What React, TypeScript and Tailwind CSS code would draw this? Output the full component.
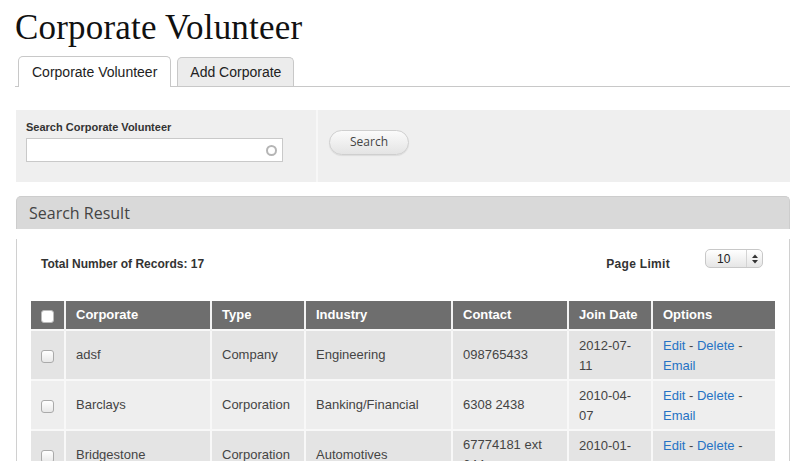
import React from 'react';

type Row = {
  corporate: string;
  type: string;
  industry: string;
  contact: string;
  joinDate: string;
};

const rows: Row[] = [
  { corporate: 'adsf', type: 'Company', industry: 'Engineering', contact: '098765433', joinDate: '2012-07-11' },
  { corporate: 'Barclays', type: 'Corporation', industry: 'Banking/Financial', contact: '6308 2438', joinDate: '2010-04-07' },
  { corporate: 'Bridgestone', type: 'Corporation', industry: 'Automotives', contact: '67774181 ext 644', joinDate: '2010-01-16' },
];

const Checkbox: React.FC<{ header?: boolean }> = ({ header }) => (
  <span
    className={`inline-block w-[13px] h-[13px] rounded-[3px] border ${
      header ? 'bg-white border-[#bbb]' : 'bg-gradient-to-b from-white to-[#e8e8e8] border-[#aaa]'
    }`}
  />
);

const App: React.FC = () => {
  return (
    <div
      className="w-[800px] h-[461px] overflow-hidden bg-white text-[#333]"
      style={{ fontFamily: '"Liberation Sans", Arial, sans-serif' }}
    >
      <div className="pl-[15px] pr-[10px]">
        <h1
          className="pt-[8px] text-[35px] leading-[40px] text-[#111] tracking-[0.2px]"
          style={{ fontFamily: '"Liberation Serif", Georgia, serif' }}
        >
          Corporate Volunteer
        </h1>

        {/* tabs */}
        <div className="mt-[8px] flex items-end gap-[6px] border-b border-[#c8c8c8] pl-[3px] h-[31px]">
          <div className="h-[31px] -mb-px px-[13px] flex items-center bg-white border border-b-0 border-[#c8c8c8] rounded-t-[5px] text-[14px] text-[#222]">
            Corporate Volunteer
          </div>
          <div className="h-[29px] px-[12px] flex items-center bg-[#ececec] border border-b-0 border-[#c8c8c8] rounded-t-[5px] text-[14px] text-[#222]">
            Add Corporate
          </div>
        </div>

        {/* search panel */}
        <div className="mt-[23px] ml-px flex h-[72px] bg-[#efefef]">
          <div className="w-[302px] pl-[10px] pt-[10px] border-r-2 border-[#f7f7f7]">
            <div className="text-[11px] font-bold leading-[14px] text-[#333]">Search Corporate Volunteer</div>
            <div className="mt-[4px] w-[257px] h-[24px] bg-white border border-[#c9c9c9] flex items-center justify-end pr-[5px]">
              <span className="w-[11px] h-[11px] rounded-full border-2 border-[#b5b5b5]" />
            </div>
          </div>
          <div className="pl-[11px] pt-[19px]">
            <button
              type="button"
              className="w-[80px] h-[25px] rounded-full border border-[#cfcfcf] bg-gradient-to-b from-[#fbfbfb] to-[#e4e4e4] text-[12px] text-[#444] shadow-[0_1px_1px_rgba(0,0,0,0.08)]"
              style={{ fontFamily: '"Open Sans", sans-serif' }}
            >
              Search
            </button>
          </div>
        </div>

        {/* result panel */}
        <div className="mt-[14px] ml-px">
          <div
            className="h-[33px] bg-[#d9d9d9] border border-[#cdcdcd] border-b-0 rounded-t-[5px] pl-[12px] flex items-center text-[16px] text-[#444]"
            style={{ fontFamily: '"Open Sans", sans-serif' }}
          >
            Search Result
          </div>
          <div className="bg-white border-x border-[#d0d0d0] px-[14px] h-[260px]">
            <div className="flex items-center h-[48px] mt-[10px] pl-[10px] pr-[12px]">
              <div className="text-[12px] font-bold text-[#333] pt-[2px]">Total Number of Records: 17</div>
              <div className="ml-auto text-[12px] font-bold text-[#333] pt-[2px] tracking-[0.3px]">Page Limit</div>
              <div className="ml-[35px] w-[58px] h-[19px] -mt-[9px] rounded-[5px] border border-[#c8c8c8] bg-gradient-to-b from-white to-[#e6e6e6] flex items-center text-[12px] text-[#222]">
                <span className="pl-[11px] w-[40px]">10</span>
                <span className="h-full border-l border-[#d4d4d4]" />
                <svg width="14" height="12" viewBox="0 0 14 12" className="ml-[1px]">
                  <path d="M4 5 L7 1.5 L10 5 Z" fill="#333" />
                  <path d="M4 7 L7 10.5 L10 7 Z" fill="#333" />
                </svg>
              </div>
            </div>

            <table className="mt-[14px] w-[744px] table-fixed border-collapse text-[13px]">
              <colgroup>
                <col className="w-[34px]" />
                <col className="w-[146px]" />
                <col className="w-[94px]" />
                <col className="w-[147px]" />
                <col className="w-[116px]" />
                <col className="w-[84px]" />
                <col className="w-[123px]" />
              </colgroup>
              <thead>
                <tr className="bg-[#6e6e6e] text-white h-[29px]">
                  <th className="border-r-2 border-[#f3f3f3] text-center align-middle">
                    <span className="flex justify-center pt-[2px]">
                      <Checkbox header />
                    </span>
                  </th>
                  {['Corporate', 'Type', 'Industry', 'Contact', 'Join Date', 'Options'].map((h, i, arr) => (
                    <th
                      key={h}
                      className={`text-left font-bold px-[10px] ${i < arr.length - 1 ? 'border-r-2 border-[#f3f3f3]' : ''}`}
                    >
                      {h}
                    </th>
                  ))}
                </tr>
              </thead>
              <tbody>
                {rows.map((r, i) => (
                  <tr key={r.corporate} className={`${i % 2 === 0 ? 'bg-[#e4e4e4]' : 'bg-[#eeeeee]'} border-t-2 border-[#f8f8f8]`}>
                    <td className="border-r-2 border-[#f8f8f8] text-center align-middle h-[48px]">
                      <span className="flex justify-center pt-[2px]">
                        <Checkbox />
                      </span>
                    </td>
                    <td className="px-[10px] align-middle border-r-2 border-[#f8f8f8] text-[#444]">{r.corporate}</td>
                    <td className="px-[10px] align-middle border-r-2 border-[#f8f8f8] text-[#444]">{r.type}</td>
                    <td className="px-[10px] align-middle border-r-2 border-[#f8f8f8] text-[#444]">{r.industry}</td>
                    <td className="px-[10px] align-middle border-r-2 border-[#f8f8f8] text-[#444] leading-[20px]">{r.contact}</td>
                    <td className="px-[10px] pt-[5px] pb-[3px] align-top border-r-2 border-[#f8f8f8] text-[#444] leading-[20px]">
                      {r.joinDate}
                    </td>
                    <td className="px-[10px] pt-[5px] pb-[3px] align-top leading-[20px] text-[#444]">
                      <a className="text-[#2673c4]" href="#">Edit</a> -{' '}
                      <a className="text-[#2673c4]" href="#">Delete</a> -{' '}
                      <a className="text-[#2673c4]" href="#">Email</a>
                    </td>
                  </tr>
                ))}
              </tbody>
            </table>
          </div>
        </div>
      </div>
    </div>
  );
};

export default App;
